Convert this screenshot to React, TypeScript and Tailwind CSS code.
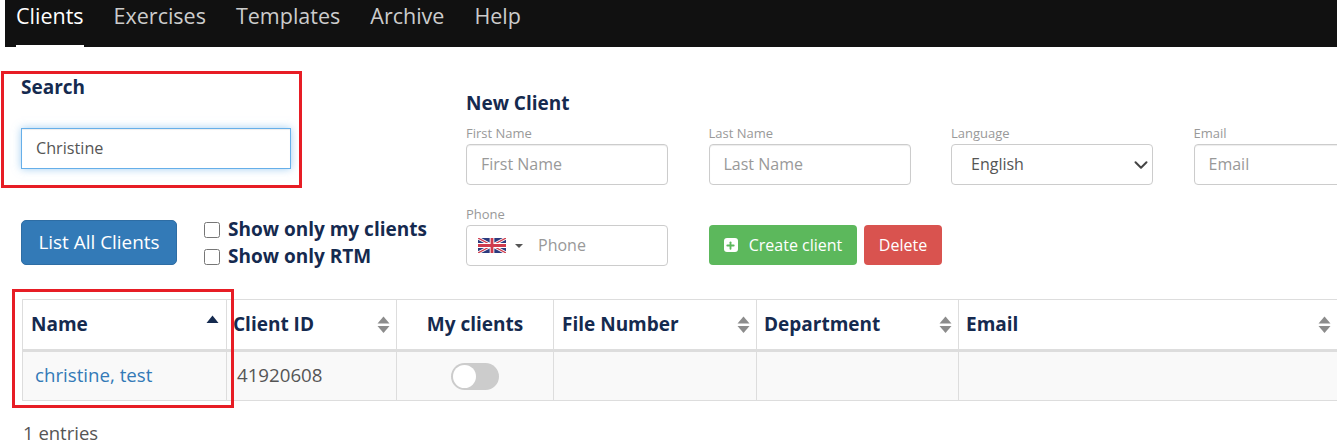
import { ChevronDown, Plus } from 'lucide-react';

const navItems = ['Clients', 'Exercises', 'Templates', 'Archive', 'Help'];

function SortIcon({ active }: { active?: boolean }) {
  if (active) {
    return (
      <svg width="13" height="9" viewBox="0 0 13 9" className="absolute right-[7px] top-[15px]">
        <path d="M6.5 0.5 L12.5 8 H0.5 Z" fill="#152a4f" />
      </svg>
    );
  }
  return (
    <svg width="13" height="18" viewBox="0 0 13 18" className="absolute right-[6px] top-[16px]">
      <path d="M6.5 0.5 L12.5 7.5 H0.5 Z" fill="#8c8c8c" />
      <path d="M0.5 10 H12.5 L6.5 17 Z" fill="#8c8c8c" />
    </svg>
  );
}

function UkFlag() {
  return (
    <svg width="28" height="15" viewBox="0 0 60 30" preserveAspectRatio="none">
      <rect width="60" height="30" fill="#2b3a7d" />
      <path d="M0 0 L60 30 M60 0 L0 30" stroke="#fff" strokeWidth="6" />
      <path d="M0 0 L60 30 M60 0 L0 30" stroke="#cf3a4c" strokeWidth="2.5" />
      <path d="M30 0 V30 M0 15 H60" stroke="#fff" strokeWidth="10" />
      <path d="M30 0 V30 M0 15 H60" stroke="#cf3a4c" strokeWidth="6" />
    </svg>
  );
}

function Field({ label, placeholder }: { label: string; placeholder: string }) {
  return (
    <div className="w-[202px] shrink-0">
      <div className="text-[13px] leading-[17px] text-[#999] mb-[2px]">{label}</div>
      <input
        placeholder={placeholder}
        className="w-full h-[41px] px-[14px] pb-[2px] text-[16px] text-[#555] bg-white border border-[#ccc] rounded-[4px] shadow-[inset_0_1px_1px_rgba(0,0,0,0.075)] placeholder:text-[#999] outline-none"
      />
    </div>
  );
}

const columns = [
  { name: 'Name', w: 'w-[204px]', active: true, pad: 'pl-[8px]' },
  { name: 'Client ID', w: 'w-[170px]', pad: 'pl-[6px]' },
  { name: 'My clients', w: 'w-[157px]', center: true, noSort: true },
  { name: 'File Number', w: 'w-[203px]', pad: 'pl-[8px]' },
  { name: 'Department', w: 'w-[202px]', pad: 'pl-[7px]' },
  { name: 'Email', w: 'w-[379px]', pad: 'pl-[7px]' },
];

export default function App() {
  return (
    <div className="relative w-[1337px] h-[448px] overflow-hidden bg-white font-['Open_Sans',sans-serif] text-[#555]">
      {/* Top nav */}
      <nav className="ml-[5px] h-[47px] bg-[#111] flex pl-[11px] gap-[30px] text-[21.5px] text-[#ccc]">
        {navItems.map((item, i) => (
          <div
            key={item}
            className={i === 0 ? 'h-[47px] leading-[32px] text-white border-b-2 border-white' : 'h-[47px] leading-[32px]'}
          >
            {item}
          </div>
        ))}
      </nav>

      <div className="flex h-[252px]">
        {/* Left column */}
        <div className="w-[466px] shrink-0 pl-[21px]">
          <h2 className="mt-[28px] text-[19px] leading-[24px] font-bold text-[#152a4f]">Search</h2>
          <input
            defaultValue="Christine"
            className="mt-[29px] w-[270px] h-[41px] px-[14px] pb-[2px] text-[16.2px] text-[#555] bg-white border border-[#66afe9] shadow-[inset_0_1px_1px_rgba(0,0,0,0.075),0_0_8px_rgba(102,175,233,0.6)] outline-none"
          />
          <div className="mt-[47px] flex items-start">
            <button className="mt-[4px] w-[156px] h-[45px] bg-[#337ab7] border border-[#2e6da4] rounded-[5px] text-white text-[18.9px]">
              List All Clients
            </button>
            <div className="ml-[27px] text-[19px] leading-[27px] font-bold text-[#152a4f]">
              <label className="flex items-center gap-[8px]">
                <input type="checkbox" className="w-4 h-4" />
                Show only my clients
              </label>
              <label className="flex items-center gap-[8px]">
                <input type="checkbox" className="w-4 h-4" />
                Show only RTM
              </label>
            </div>
          </div>
        </div>

        {/* New client form */}
        <div className="flex-1 min-w-0">
          <h2 className="mt-[44px] text-[19px] leading-[24px] font-bold text-[#152a4f]">New Client</h2>
          <div className="mt-[10px] flex gap-[40.5px]">
            <Field label="First Name" placeholder="First Name" />
            <Field label="Last Name" placeholder="Last Name" />
            <div className="w-[202px] shrink-0">
              <div className="text-[13px] leading-[17px] text-[#999] mb-[2px]">Language</div>
              <div className="relative">
                <select className="w-full h-[41px] pl-[19px] pr-[6px] pb-[2px] text-[16px] text-[#555] bg-white border border-[#ccc] rounded-[4px] outline-none appearance-none">
                  <option>English</option>
                </select>
                <ChevronDown className="absolute right-[1.5px] top-[10px] w-[22px] h-[22px] text-[#444] pointer-events-none" strokeWidth={2.2} />
              </div>
            </div>
            <Field label="Email" placeholder="Email" />
          </div>
          <div className="mt-[21px] flex gap-[41px] items-end">
            <div className="w-[202px] shrink-0">
              <div className="text-[13px] leading-[17px] text-[#999] mb-[2px]">Phone</div>
              <div className="w-full h-[41px] pl-[11px] flex items-center bg-white border border-[#ccc] rounded-[4px]">
                <UkFlag />
                <span className="ml-[9px] w-0 h-0 border-x-[4px] border-x-transparent border-t-[4px] border-t-[#555]" />
                <input
                  placeholder="Phone"
                  className="ml-[15px] w-[110px] pb-[2px] text-[16px] placeholder:text-[#999] outline-none"
                />
              </div>
            </div>
            <div className="flex gap-[7px] mb-[1px]">
              <button className="w-[148px] h-[40px] flex items-center justify-center gap-[11px] bg-[#5cb85c] rounded-[4px] text-white text-[16px]">
                <span className="w-[14px] h-[14px] bg-white rounded-[3px] flex items-center justify-center">
                  <Plus className="w-[11px] h-[11px] text-[#5cb85c]" strokeWidth={4} />
                </span>
                Create client
              </button>
              <button className="w-[78px] h-[40px] bg-[#d9534f] rounded-[4px] text-white text-[16px]">Delete</button>
            </div>
          </div>
        </div>
      </div>

      {/* Clients table */}
      <table className="ml-[22px] table-fixed border-collapse w-[1315px]">
        <thead>
          <tr className="h-[51px] border-t border-[#ddd] border-b-[3px] border-b-[#ddd]">
            {columns.map((col) => (
              <th
                key={col.name}
                className={`relative ${col.w} ${col.pad ?? ''} ${col.center ? 'text-center' : 'text-left'} border-x border-[#ddd] text-[19px] font-bold text-[#152a4f]`}
              >
                {col.name}
                {!col.noSort && <SortIcon active={col.active} />}
              </th>
            ))}
          </tr>
        </thead>
        <tbody>
          <tr className="h-[50px] bg-[#f9f9f9] border-b border-[#ddd] text-[18.7px]">
            <td className="border-x border-[#ddd] pl-[12px] pb-[2px] text-[#337ab7]">christine, test</td>
            <td className="border-x border-[#ddd] pl-[10px] pb-[2px]">41920608</td>
            <td className="border-x border-[#ddd]">
              <div className="mx-auto w-[48px] h-[27px] rounded-full bg-[#ccc] p-[2px]">
                <div className="w-[23px] h-[23px] rounded-full bg-white" />
              </div>
            </td>
            <td className="border-x border-[#ddd]" />
            <td className="border-x border-[#ddd]" />
            <td className="border-x border-[#ddd]" />
          </tr>
        </tbody>
      </table>

      <div className="mt-[20px] ml-[23px] text-[18.5px] leading-[24px]">1 entries</div>

      {/* Red annotation boxes */}
      <div className="absolute left-[1px] top-[71px] w-[301px] h-[117px] border-[3px] border-[#e71d25]" />
      <div className="absolute left-[12px] top-[289px] w-[222px] h-[119px] border-[3px] border-[#e71d25]" />
    </div>
  );
}
